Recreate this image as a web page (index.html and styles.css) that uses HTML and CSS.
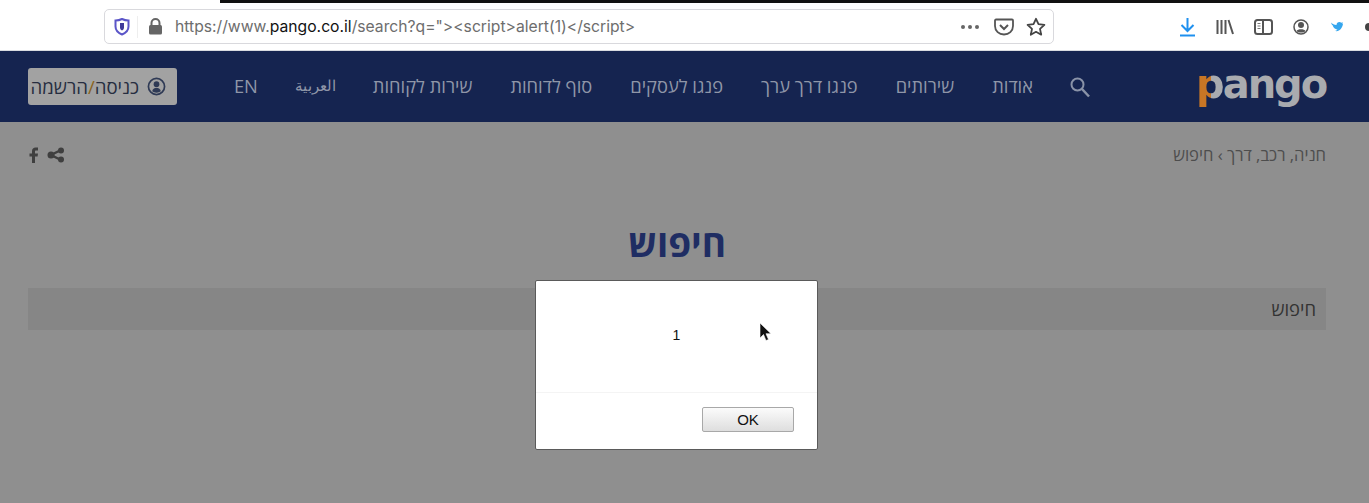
FILE: index.html
```html
<!DOCTYPE html>
<html lang="he">
<head>
<meta charset="utf-8">
<title>חיפוש</title>
<link rel="stylesheet" href="styles.css">
</head>
<body>
<div class="toolbar">
  <div class="topline"></div>
  <div class="toolrow">
    <div class="urlbar">
      <svg class="ic-shield" width="16" height="18" viewBox="0 0 16 18"><path d="M1.500 2.500C4 2.500 6 2 8 1c2 1 4 1.500 6.500 1.500v6c0 4-3 6.500-6.500 8-3.500-1.500-6.500-4-6.500-8z" fill="#fff" stroke="#5b55c8" stroke-width="2"/><path d="M6 5h4v4.500c0 1.500-1 2.500-2 3-1-.5-2-1.500-2-3z" fill="#3f3a9a"/></svg>
      <span class="sep"></span>
      <svg class="ic-lock" width="15" height="17" viewBox="0 0 15 17"><path d="M3.500 8V5a4 4 0 0 1 8 0v3" fill="none" stroke="#666" stroke-width="2"/><rect x="1" y="7" width="13" height="9.500" rx="1.500" fill="#666"/></svg>
      <div class="url">https://www.<b>pango.co.il</b>/search?q="&gt;&lt;script&gt;alert(1)&lt;/script&gt;</div>
      <div class="urlicons">
        <svg width="20" height="6" viewBox="0 0 20 6"><circle cx="3" cy="3" r="2" fill="#666"/><circle cx="10" cy="3" r="2" fill="#666"/><circle cx="17" cy="3" r="2" fill="#666"/></svg>
        <svg width="20" height="18" viewBox="0 0 20 18"><path d="M2 1.500h16a1 1 0 0 1 1 1V8c0 5-4 8.500-9 8.500S1 13 1 8V2.500a1 1 0 0 1 1-1z" fill="none" stroke="#555" stroke-width="1.800"/><path d="M6 7l4 4 4-4" fill="none" stroke="#555" stroke-width="2"/></svg>
        <svg class="ic-star" width="20" height="20" viewBox="0 0 20 20"><path d="M10 1.800l2.500 5.400 5.900.7-4.400 4 1.200 5.800L10 14.800l-5.200 2.900L6 11.900l-4.400-4 5.900-.7z" fill="none" stroke="#444" stroke-width="1.800" stroke-linejoin="round"/></svg>
      </div>
    </div>
    <div class="tools">
      <svg width="17" height="20" viewBox="0 0 17 20"><path d="M8.500 1v12M2.500 8l6 6 6-6" fill="none" stroke="#1e90ef" stroke-width="2"/><path d="M1 18.500h15" stroke="#1e90ef" stroke-width="2"/></svg>
      <svg width="18" height="16" viewBox="0 0 18 16"><path d="M1.500 1v14M5.500 1v14M9.500 1v14M12.500 1l4.500 14" fill="none" stroke="#555" stroke-width="2"/></svg>
      <svg width="19" height="16" viewBox="0 0 19 16"><rect x="1" y="1" width="17" height="14" rx="2.500" fill="none" stroke="#555" stroke-width="2"/><path d="M9 1v14" stroke="#555" stroke-width="2"/><path d="M3.500 4.500h3M3.500 7h3M3.500 9.500h3" stroke="#777"/></svg>
      <svg width="16" height="16" viewBox="0 0 16 16"><circle cx="8" cy="8" r="7" fill="none" stroke="#555" stroke-width="1.500"/><circle cx="8" cy="6" r="3" fill="#555"/><path d="M3.500 12c1-2.500 8-2.500 9 0-2 2-7 2-9 0z" fill="#555"/></svg>
      <svg class="ic-bird" width="12" height="11" viewBox="0 0 12 11"><path d="M0 1.500c1.500 1.500 3 2.300 5.500 2.500C5.500 1.500 8.500 0 10.300 1.800L12 1.200l-1 1.600 1-.2c-.3 4.400-3.500 8.400-8 7.400 1-.2 1.800-.6 2.500-1.300C3 8 1.500 5 2 4.500 1 4.300.5 3 0 1.500z" fill="#35a6ee"/></svg>
    </div>
    <div class="cutoff"></div>
  </div>
</div>

<header class="site-header">
  <div class="logo"><span class="logo-p">p</span>ango</div>
  <svg class="ic-search" width="22" height="22" viewBox="0 0 22 22"><circle cx="8.500" cy="8.500" r="6" fill="none" stroke="#8a93a8" stroke-width="2"/><path d="M13 13l7 7.500" stroke="#8a93a8" stroke-width="2.500"/></svg>
  <nav class="nav">
    <a>אודות</a>
    <a>שירותים</a>
    <a>פנגו דרך ערך</a>
    <a>פנגו לעסקים</a>
    <a>סוף לדוחות</a>
    <a>שירות לקוחות</a>
    <a class="ar">العربية</a>
    <a class="en">EN</a>
  </nav>
  <div class="login">
    <svg width="19" height="19" viewBox="0 0 20 20"><circle cx="10" cy="10" r="8.500" fill="none" stroke="#2f3a55" stroke-width="1.800"/><circle cx="10" cy="7.500" r="3" fill="#2f3a55"/><path d="M5.500 15c.5-5 8.500-5 9 0-2 2-7 2-9 0z" fill="#2f3a55"/></svg>
    <span>כניסה<i>/</i>הרשמה</span>
  </div>
</header>

<main class="content">
  <div class="crumbs">
    <div class="crumb-text">חניה, רכב, דרך › חיפוש</div>
    <div class="social">
      <svg width="14" height="16" viewBox="0 0 14 16"><path d="M11 .5v3H9c-.7 0-1 .4-1 1v2h3l-.4 3H8v6.500H5V9.500H2.500v-3H5V4C5 1.800 6.500.5 8.500.5z" fill="#3f3f3f" transform="translate(-1)"/></svg>
      <svg width="18" height="16" viewBox="0 0 18 16"><path d="M14 3L4 8l10 5" fill="none" stroke="#3f3f3f" stroke-width="2.500"/><circle cx="14" cy="3.500" r="3" fill="#3f3f3f"/><circle cx="4" cy="8" r="3.500" fill="#3f3f3f"/><circle cx="14" cy="12.500" r="3" fill="#3f3f3f"/></svg>
    </div>
  </div>
  <h1 class="title">חיפוש</h1>
  <div class="searchbar">חיפוש</div>
</main>

<div class="dialog">
  <div class="dialog-body">1</div>
  <div class="dialog-foot"><button class="ok">OK</button></div>
</div>
<svg class="cursor" width="13" height="20" viewBox="0 0 13 20"><path d="M1 1v15l3.500-3.500 2.500 6 2.500-1-2.500-5.800H12z" fill="#111" stroke="#fff" stroke-width=".6"/></svg>
</body>
</html>
```
FILE: styles.css
```css
* { box-sizing: border-box; }
html, body { margin: 0; height: 503px; overflow: hidden; }
body { position: relative; background: #8f8f8f; font-family: "Open Sans", "Liberation Sans", sans-serif; }

.toolbar { height: 51px; background: #fff; border-bottom: 1px solid #d8dbe0; }
.topline { height: 3px; margin-left: 220px; background: #111; }
.toolrow { display: flex; align-items: flex-start; padding-left: 104px; }
.urlbar { display: flex; flex: none; align-items: center; width: 950px; height: 35px; margin-top: 6px; padding: 0 7px 0 9px; background: #fff; border: 1px solid #d9d9dd; border-radius: 5px; }
.ic-shield { flex: none; }
.sep { width: 1px; height: 22px; margin: 0 10px 0 7px; background: #eee; }
.ic-lock { flex: none; }
.url { flex: 1; margin-left: 12px; font: 15.700px "Inter", sans-serif; color: #6d6d6d; white-space: nowrap; }
.url b { font-weight: 400; color: #111; }
.urlicons { display: flex; align-items: center; gap: 14px; }
.ic-star { margin-left: -2px; }
.tools { display: flex; align-items: center; height: 35px; margin-top: 6px; margin-left: 125px; gap: 20px; }
.ic-bird { margin-left: 2px; }
.cutoff { width: 5px; height: 8px; margin: 20px 0 0 22px; background: #444; border-radius: 4px 0 0 4px; }

.site-header { display: flex; direction: rtl; align-items: center; height: 71px; padding: 0 43px 0 28px; background: #152450; }
.logo { direction: ltr; width: 130px; font: 700 40px/1 "DejaVu Sans", sans-serif; letter-spacing: -2px; color: #a9abaf; margin-top: -6px; flex: none; white-space: nowrap; }
.logo-p { background: linear-gradient(90deg, #c87625 55%, #a9abaf 55%); -webkit-background-clip: text; background-clip: text; color: transparent; }
.ic-search { flex: none; margin-right: 105px; }
.nav { display: flex; flex: 1; gap: 38px; margin: 0 36px 2px 0; font-size: 18.300px; color: #8f96a8; white-space: nowrap; }
.nav .ar { margin-right: -1px; font-size: 14.500px; line-height: 25px; }
.nav .en { direction: ltr; margin-right: -1px; }
.login { display: flex; flex: none; align-items: center; gap: 8px; width: 149px; height: 37px; padding: 0 11px 0 0; background: #a2a2a2; border-radius: 3px; font-size: 18.600px; color: #262d40; white-space: nowrap; }
.login i { font-style: normal; color: #8a6420; }

.content { direction: rtl; padding: 0 43px 0 28px; }
.crumbs { display: flex; justify-content: space-between; align-items: center; height: 64px; padding-top: 1px; }
.crumb-text { font-size: 16.600px; color: #4d4d4d; }
.social { display: flex; direction: ltr; order: 1; align-items: center; gap: 5px; }
.title { margin: 36px 0 0; text-align: center; font-size: 37px; font-weight: 700; line-height: 42px; color: #1f2d63; }
.searchbar { height: 42px; margin-top: 24px; padding: 0 10px; line-height: 42px; font-size: 18.400px; color: #333; background: #868686; }

.dialog { position: absolute; left: 535px; top: 280px; display: flex; flex-direction: column; width: 283px; height: 170px; background: #fff; border: 1px solid #5a5a5a; border-radius: 2px; }
.dialog-body { height: 112px; padding-top: 45px; text-align: center; font: 14px/18px "Liberation Sans", sans-serif; color: #111; border-bottom: 1px solid #f4f4f4; }
.dialog-foot { display: flex; justify-content: flex-end; flex: 1; padding: 14px 23px 0 0; }
.ok { width: 92px; height: 25px; padding: 0; font: 15px "Liberation Sans", sans-serif; color: #111; background: linear-gradient(#fbfbfb, #dedede); border: 1px solid #a8a8a8; border-radius: 2px; }
.cursor { position: absolute; left: 759px; top: 322px; }
```
